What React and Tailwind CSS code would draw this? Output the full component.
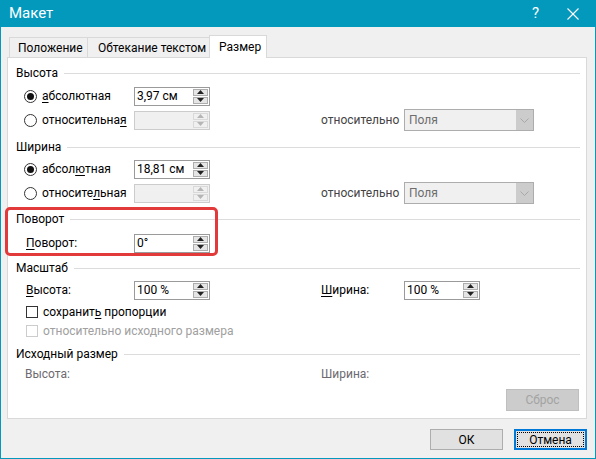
import React from "react";

const F = { fontFamily: 'Roboto, "Noto Sans", sans-serif' };

function U({ children }) {
  return <span className="underline underline-offset-2">{children}</span>;
}

function Header({ children, mt = "" }) {
  return (
    <div className={`flex h-[20px] items-center pl-[8px] pr-[6px] ${mt}`}>
      <span className="text-[12px] text-black">{children}</span>
      <div className="ml-[6px] h-px flex-1 bg-[#dcdcdc]" />
    </div>
  );
}

function Tri({ up, disabled }) {
  return (
    <svg width="7" height="4" viewBox="0 0 7 4">
      <polygon
        points={up ? "0,4 7,4 3.5,0" : "0,0 7,0 3.5,4"}
        fill={disabled ? "#b5b5b5" : "#222"}
      />
    </svg>
  );
}

function Spin({ value, disabled, w = "w-[76px]" }) {
  return (
    <div
      className={`flex h-[19px] ${w} items-stretch border ${
        disabled ? "border-[#cccccc] bg-[#f0f0f0]" : "border-[#9a9a9a] bg-white"
      }`}
    >
      <div className="flex flex-1 items-center pl-[2px] text-[12px] text-black">{value}</div>
      <div className="flex w-[16px] flex-col gap-[1px] py-[1px] pr-[1px]">
        <div
          className={`flex flex-1 items-center justify-center border ${
            disabled ? "border-[#d9d9d9] bg-[#f0f0f0]" : "border-[#adadad] bg-[#e5e5e5]"
          }`}
        >
          <Tri up disabled={disabled} />
        </div>
        <div
          className={`flex flex-1 items-center justify-center border ${
            disabled ? "border-[#d9d9d9] bg-[#f0f0f0]" : "border-[#adadad] bg-[#e5e5e5]"
          }`}
        >
          <Tri disabled={disabled} />
        </div>
      </div>
    </div>
  );
}

function Radio({ on }) {
  return (
    <div className="flex h-[13px] w-[13px] items-center justify-center rounded-full border border-[#333] bg-white">
      {on && <div className="h-[7px] w-[7px] rounded-full bg-[#111]" />}
    </div>
  );
}

function Dropdown() {
  return (
    <div className="flex h-[22px] w-[130px] items-stretch border border-[#adadad] bg-[#f0f0f0]">
      <div className="flex flex-1 items-center pl-[4px] text-[12px] text-[#6d6d6d]">Поля</div>
      <div className="flex w-[17px] items-center justify-center bg-[#cccccc]">
        <svg width="9" height="5" viewBox="0 0 9 5">
          <polyline points="0.5,0.5 4.5,4.5 8.5,0.5" fill="none" stroke="#a8a8a8" strokeWidth="1" />
        </svg>
      </div>
    </div>
  );
}

function RadioRow({ on, label, value, disabled, right }) {
  return (
    <div className="flex h-[24px] items-center pl-[16px]">
      <div className="flex w-[297px] items-center">
        <div className="flex w-[110px] items-center gap-[5px]">
          <Radio on={on} />
          <span className="text-[12px] text-black">{label}</span>
        </div>
        <Spin value={value} disabled={disabled} />
      </div>
      {right && (
        <>
          <span className="w-[83px] text-[12px] text-[#444]">относительно</span>
          <Dropdown />
        </>
      )}
    </div>
  );
}

export default function App() {
  return (
    <div
      style={F}
      className="relative flex h-[459px] w-[596px] flex-col border-x border-b border-[#0399bd] bg-[#f0f0f0]"
    >
      {/* title bar */}
      <div className="flex h-[27px] shrink-0 items-center bg-[#0399bd] pl-[8px] text-white">
        <span className="text-[15px]">Макет</span>
        <div className="flex-1" />
        <span className="mr-[28px] text-[15px]">?</span>
        <svg width="12" height="12" viewBox="0 0 12 12" className="mr-[16px]">
          <line x1="0.5" y1="0.5" x2="11.5" y2="11.5" stroke="white" strokeWidth="1.1" />
          <line x1="11.5" y1="0.5" x2="0.5" y2="11.5" stroke="white" strokeWidth="1.1" />
        </svg>
      </div>

      <div className="flex flex-1 flex-col pl-[6px] pt-[8px]">
        {/* tabs */}
        <div className="relative z-10 ml-[2px] flex h-[22px] items-end text-[12px] text-black">
          <div className="flex h-[20px] w-[78px] items-center border-l border-t border-[#d9d9d9] bg-[#f0f0f0] pl-[8px]">
            Положение
          </div>
          <div className="flex h-[20px] w-[122px] items-center border-l border-t border-[#d9d9d9] bg-[#f0f0f0] pl-[10px]">
            Обтекание текстом
          </div>
          <div className="-mb-px flex h-[23px] w-[58px] items-center border-x border-t border-[#d9d9d9] bg-white pl-[9px]">
            Размер
          </div>
        </div>

        {/* panel */}
        <div className="flex h-[362px] w-[580px] flex-col border border-[#d9d9d9] bg-white pt-[5px]">
          <Header>Высота</Header>
          <div className="mt-[1px]">
            <RadioRow on label={<><U>а</U>бсолютная</>} value="3,97 см" />
            <RadioRow label={<>относительна<U>я</U></>} value="" disabled right />
          </div>
          <Header mt="mt-[5px]">Ширина</Header>
          <RadioRow on label={<>абсол<U>ю</U>тная</>} value="18,81 см" />
          <RadioRow label={<>относите<U>л</U>ьная</>} value="" disabled right />

          <Header mt="mt-[4px]">Поворот</Header>
          <div className="mt-[2px] flex h-[24px] items-center pl-[18px]">
            <span className="w-[108px] text-[12px] text-black">
              <U>П</U>оворот:
            </span>
            <Spin value="0°" />
          </div>

          <Header mt="mt-[3px]">Масштаб</Header>
          <div className="flex h-[24px] items-center pl-[18px]">
            <div className="flex w-[295px] items-center">
              <span className="w-[108px] text-[12px] text-black">
                <U>В</U>ысота:
              </span>
              <Spin value="100 %" />
            </div>
            <span className="w-[83px] text-[12px] text-black">
              <U>Ш</U>ирина:
            </span>
            <Spin value="100 %" />
          </div>
          <div className="flex h-[20px] items-center gap-[5px] pl-[18px]">
            <div className="h-[12px] w-[12px] border border-[#333] bg-white" />
            <span className="text-[12px] text-black">
              сохранит<U>ь</U> пропорции
            </span>
          </div>
          <div className="flex h-[18px] items-center gap-[5px] pl-[18px]">
            <div className="h-[12px] w-[12px] border border-[#cccccc] bg-white" />
            <span className="text-[12px] text-[#a0a0a0]">относительно исходного размера</span>
          </div>

          <Header mt="mt-[4px]">Исходный размер</Header>
          <div className="flex h-[20px] items-center pl-[17px] text-[12px] text-[#6d6a70]">
            <span className="w-[296px]">Высота:</span>
            <span>Ширина:</span>
          </div>
          <div className="mt-[5px] flex justify-end pr-[7px]">
            <div className="flex h-[22px] w-[73px] items-center justify-center border border-[#bfbfbf] bg-[#cccccc] text-[12px] text-[#a3a3a3]">
              Сброс
            </div>
          </div>
        </div>

        {/* buttons */}
        <div className="mt-[10px] flex justify-end gap-[11px] pr-[8px]">
          <div className="flex h-[21px] w-[73px] items-center justify-center border border-[#adadad] bg-[#e1e1e1] text-[12px] text-black">
            ОК
          </div>
          <div className="flex h-[21px] w-[73px] items-center justify-center border-2 border-[#0078d7] bg-[#e1e1e1] p-[1px]">
            <div className="flex h-full w-full items-center justify-center border border-dotted border-black text-[12px] text-black">
              Отмена
            </div>
          </div>
        </div>
      </div>

      {/* annotation overlay */}
      <div className="pointer-events-none absolute left-[4px] top-[207px] h-[49px] w-[213px] rounded-[5px] border-[3px] border-[#e23a3a]" />
    </div>
  );
}
